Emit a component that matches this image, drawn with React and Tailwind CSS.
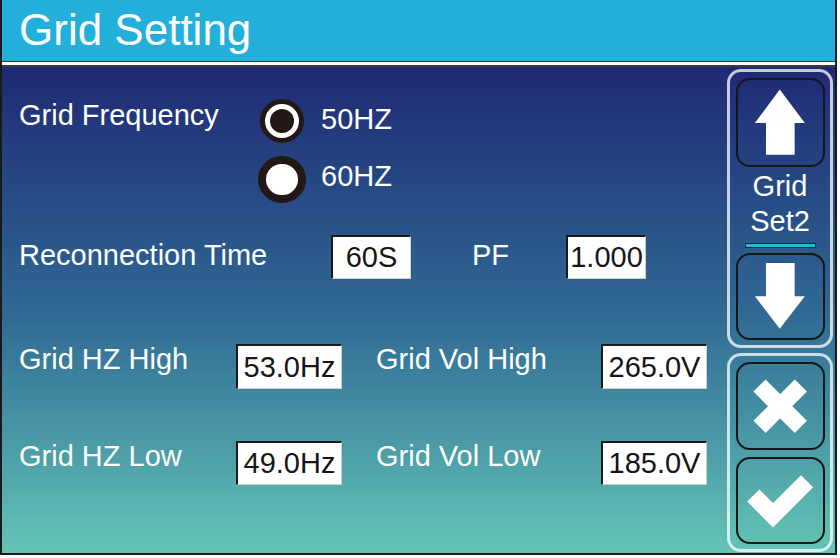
import React from 'react';

// Pantalla de ajustes de red (inversor)
const font = { fontFamily: '"Liberation Sans", Arial, sans-serif' };

const ValueBox = ({ value, w }) => (
  <div
    className={`${w} h-full bg-white border-t-2 border-l-2 border-t-[#1a1a1a] border-l-[#1a1a1a] border-r border-b border-r-[#cfcfcf] border-b-[#cfcfcf] flex items-center justify-center text-[29px] leading-none text-[#1a1414]`}
  >
    {value}
  </div>
);

const NavButton = ({ h, children }) => (
  <div className={`w-[89px] ${h} rounded-[14px] border-2 border-[#161616] flex items-center justify-center`}>
    {children}
  </div>
);

const App = () => {
  return (
    <div className="w-[840px] h-[558px] bg-white" style={font}>
      <div className="w-[837px] h-[555px] border-l-2 border-r-2 border-b-2 border-[#1a1a1a] flex flex-col">
        {/* Header */}
        <div className="h-[61px] bg-[#22b0da] pl-[17px] pt-[8px]">
          <span className="text-[44px] leading-none text-white">Grid Setting</span>
        </div>
        <div className="h-px bg-[#3a3a3a]" />
        <div className="h-[3px] bg-white" />
        <div className="h-[2px] bg-[#3a3a3a]" />

        {/* Body */}
        <div className="flex-1 flex flex-row bg-linear-to-b from-[#1f2974] via-[#306893] to-[#64c5b5] text-white">
          {/* Left content */}
          <div className="flex-1 flex flex-col pl-[17px] text-[29px] leading-none">
            {/* Grid Frequency 50HZ */}
            <div className="mt-[32px] h-[44px] flex items-center">
              <div className="w-[239px] -mt-3">Grid Frequency</div>
              <div className="w-[48px] flex justify-center">
                <div className="w-[44px] h-[44px] rounded-full bg-white border-[5px] border-[#231815] flex items-center justify-center">
                  <div className="w-[24px] h-[24px] rounded-full bg-[#231815]" />
                </div>
              </div>
              <div className="ml-[15px] -mt-1">50HZ</div>
            </div>
            {/* 60HZ */}
            <div className="mt-[13px] h-[47px] flex items-center">
              <div className="w-[239px]" />
              <div className="w-[48px] flex justify-center">
                <div className="w-[48px] h-[47px] rounded-full bg-white border-[8px] border-[#231815]" />
              </div>
              <div className="ml-[15px] -mt-[6px]">60HZ</div>
            </div>
            {/* Reconnection / PF */}
            <div className="mt-[32px] h-[44px] flex items-center">
              <div className="w-[312px] -mt-1">Reconnection Time</div>
              <ValueBox value="60S" w="w-[80px]" />
              <div className="w-[155px] pl-[61px] -mt-[3px]">PF</div>
              <ValueBox value="1.000" w="w-[80px]" />
            </div>
            {/* High */}
            <div className="mt-[65px] h-[45px] flex items-center">
              <div className="w-[217px] -mt-[14px]">Grid HZ High</div>
              <ValueBox value="53.0Hz" w="w-[106px]" />
              <div className="w-[259px] pl-[34px] -mt-[14px]">Grid Vol High</div>
              <ValueBox value="265.0V" w="w-[106px]" />
            </div>
            {/* Low */}
            <div className="mt-[52px] h-[44px] flex items-center">
              <div className="w-[217px] -mt-[14px]">Grid HZ Low</div>
              <ValueBox value="49.0Hz" w="w-[106px]" />
              <div className="w-[259px] pl-[34px] -mt-[14px]">Grid Vol Low</div>
              <ValueBox value="185.0V" w="w-[106px]" />
            </div>
          </div>

          {/* Right column */}
          <div className="w-[106px] mr-[2px] flex flex-col">
            <div className="mt-[2px] h-[279px] rounded-[14px] border-[3px] border-white/75 flex flex-col items-center">
              <div className="mt-[6px]">
                <NavButton h="h-[89px]">
                  <svg width="89" height="89" viewBox="0 0 89 89">
                    <polygon points="43.7,10 70,45 59.3,45 59.3,78.3 29.3,78.3 29.3,45 17.7,45" fill="white" />
                  </svg>
                </NavButton>
              </div>
              <div className="mt-[2px] text-[29px] leading-[35px] text-center">
                <div>Grid</div>
                <div>Set2</div>
              </div>
              <div className="mt-[4px] w-[71px] h-[5px] bg-[#2cb4d8] border border-[#1a2a40]" />
              <div className="mt-[5px]">
                <NavButton h="h-[87px]">
                  <svg width="89" height="87" viewBox="0 0 89 87">
                    <polygon points="29.3,8.3 59.3,8.3 59.3,43.3 70,43.3 43.7,77.3 17.7,43.3 29.3,43.3" fill="white" />
                  </svg>
                </NavButton>
              </div>
            </div>
            <div className="mt-[5px] h-[199px] rounded-[14px] border-[3px] border-white/75 flex flex-col items-center">
              <div className="mt-[6px]">
                <NavButton h="h-[88px]">
                  <svg width="89" height="88" viewBox="0 0 89 88">
                    <line x1="22.5" y1="22.5" x2="65.8" y2="65.8" stroke="white" strokeWidth="18" />
                    <line x1="65.8" y1="22.5" x2="22.5" y2="65.8" stroke="white" strokeWidth="18" />
                  </svg>
                </NavButton>
              </div>
              <div className="mt-[7px]">
                <NavButton h="h-[87px]">
                  <svg width="89" height="87" viewBox="0 0 89 87">
                    <polyline points="16,38.3 36.6,59 72.3,23.3" fill="none" stroke="white" strokeWidth="18" strokeLinejoin="miter" />
                  </svg>
                </NavButton>
              </div>
            </div>
          </div>
        </div>
      </div>
    </div>
  );
};

export default App;
